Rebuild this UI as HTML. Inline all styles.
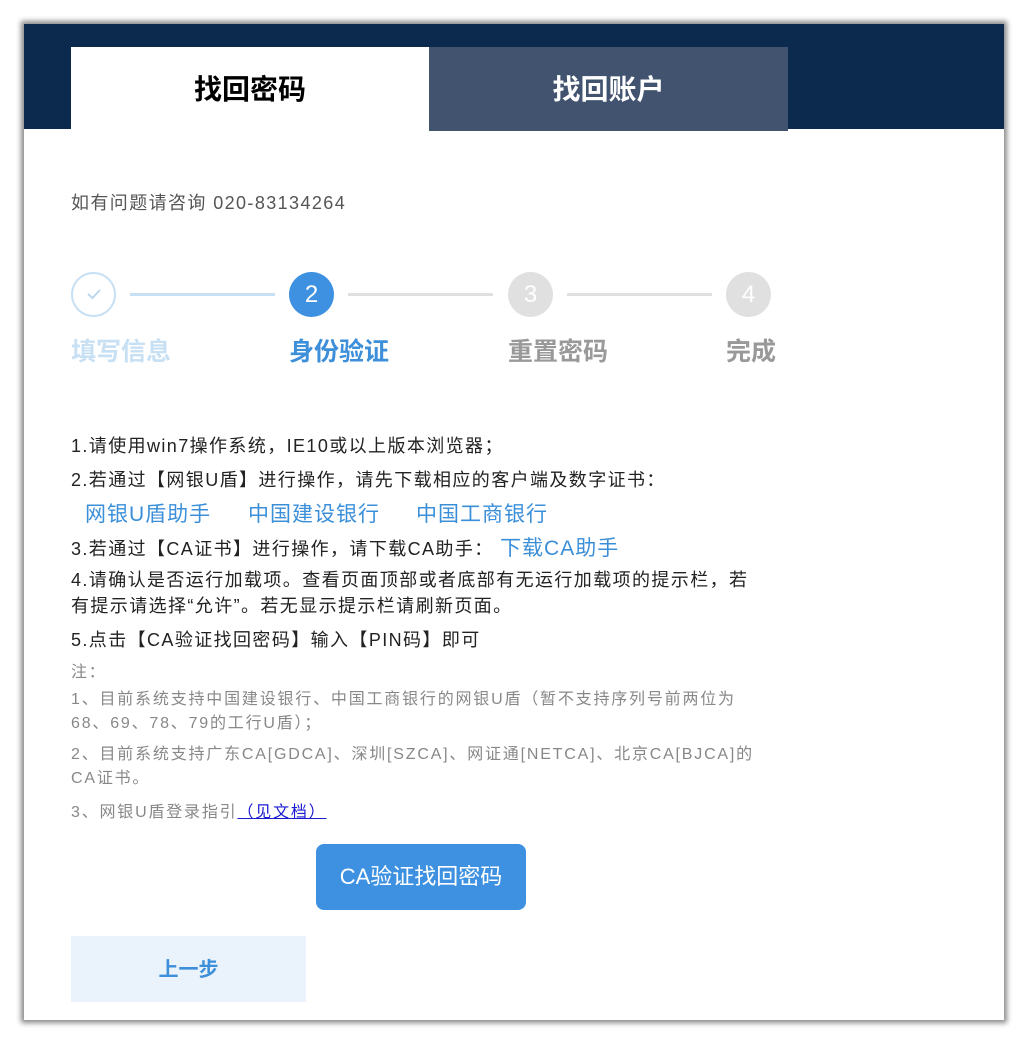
<!DOCTYPE html>
<html><head><meta charset="utf-8"><style>
*{margin:0;padding:0;box-sizing:border-box}
body{width:1029px;height:1045px;background:#fff;font-family:"Liberation Sans","Noto Sans CJK SC",sans-serif;position:relative;overflow:hidden}
.card{position:absolute;left:24px;top:24px;width:980px;height:996px;background:#fff;box-shadow:0 0 5px 3px #8a8a8a}
.hdr{position:absolute;left:0;top:0;width:980px;height:105px;background:#0b2a4e}
.tab{position:absolute;top:23px;height:83px;font-size:28px;font-weight:bold;text-align:center;line-height:86px}
.t1{left:47px;width:358px;background:#fff;color:#000}
.t2{left:405px;width:359px;background:#41536e;color:#fff;height:84px}
.abs{position:absolute;white-space:nowrap}
.tel{left:47px;top:165px;font-size:18px;color:#555;letter-spacing:1.4px}
.circ{position:absolute;width:45px;height:45px;border-radius:50%;text-align:center;line-height:45px;font-size:24px;color:#fff}
.line{position:absolute;height:3px;top:269px;width:145px}
.lbl{position:absolute;top:308px;font-size:25px;font-weight:bold}
.txt{font-size:18px;color:#222;left:47px;letter-spacing:1.4px}
.lnk{font-size:21px;color:#3b8fd9;letter-spacing:1px}
.note{font-size:16px;color:#888;left:47px;letter-spacing:1.8px}
.btn{position:absolute;left:292px;top:820px;width:210px;height:66px;background:#3d91e0;color:#fff;font-size:22px;text-align:center;line-height:66px;border-radius:8px}
.prev{position:absolute;left:47px;top:912px;width:235px;height:66px;background:#eaf3fb;color:#3d8fd9;font-size:20px;font-weight:bold;text-align:center;line-height:68px}
</style></head><body>
<div class="card">
<div class="hdr"></div>
<div class="tab t1">找回密码</div>
<div class="tab t2">找回账户</div>
<div class="abs tel">如有问题请咨询 020-83134264</div>

<div class="circ" style="left:47px;top:248px;border:2px solid #c7e0f4;background:#fff;color:#c7e0f4;line-height:41px">
<svg width="20" height="20" viewBox="0 0 20 20" style="margin-top:10px"><path d="M4 10 L8.5 14 L16 6" fill="none" stroke="#bcd8f0" stroke-width="2"/></svg></div>
<div class="line" style="left:106px;background:#c7e0f4"></div>
<div class="circ" style="left:265px;top:248px;background:#3d91e0">2</div>
<div class="line" style="left:324px;background:#e0e0e0"></div>
<div class="circ" style="left:484px;top:248px;background:#e0e0e0">3</div>
<div class="line" style="left:543px;background:#e0e0e0"></div>
<div class="circ" style="left:702px;top:248px;background:#e0e0e0">4</div>
<div class="lbl" style="left:47px;color:#c7e0f4">填写信息</div>
<div class="lbl" style="left:265px;color:#3d8fd9">身份验证</div>
<div class="lbl" style="left:484px;color:#999">重置密码</div>
<div class="lbl" style="left:702px;color:#999">完成</div>

<div class="abs txt" style="top:408px">1.请使用win7操作系统，IE10或以上版本浏览器；</div>
<div class="abs txt" style="top:442px">2.若通过【网银U盾】进行操作，请先下载相应的客户端及数字证书：</div>
<div class="abs lnk" style="left:61px;top:474px">网银U盾助手</div>
<div class="abs lnk" style="left:224px;top:474px">中国建设银行</div>
<div class="abs lnk" style="left:392px;top:474px">中国工商银行</div>
<div class="abs txt" style="top:508px">3.若通过【CA证书】进行操作，请下载CA助手： <span class="lnk">下载CA助手</span></div>
<div class="abs txt" style="top:543px;line-height:26px">4.请确认是否运行加载项。查看页面顶部或者底部有无运行加载项的提示栏，若<br>有提示请选择“允许”。若无显示提示栏请刷新页面。</div>
<div class="abs txt" style="top:602px">5.点击【CA验证找回密码】输入【PIN码】即可</div>
<div class="abs note" style="top:634px">注：</div>
<div class="abs note" style="top:664px;line-height:24px">1、目前系统支持中国建设银行、中国工商银行的网银U盾（暂不支持序列号前两位为<br>68、69、78、79的工行U盾）；</div>
<div class="abs note" style="top:719px;line-height:24px">2、目前系统支持广东CA[GDCA]、深圳[SZCA]、网证通[NETCA]、北京CA[BJCA]的<br>CA证书。</div>
<div class="abs note" style="top:774px">3、网银U盾登录指引<span style="color:#1a1ad0;text-decoration:underline">（见文档）</span></div>
<div class="btn">CA验证找回密码</div>
<div class="prev">上一步</div>
</div>
</body></html>
